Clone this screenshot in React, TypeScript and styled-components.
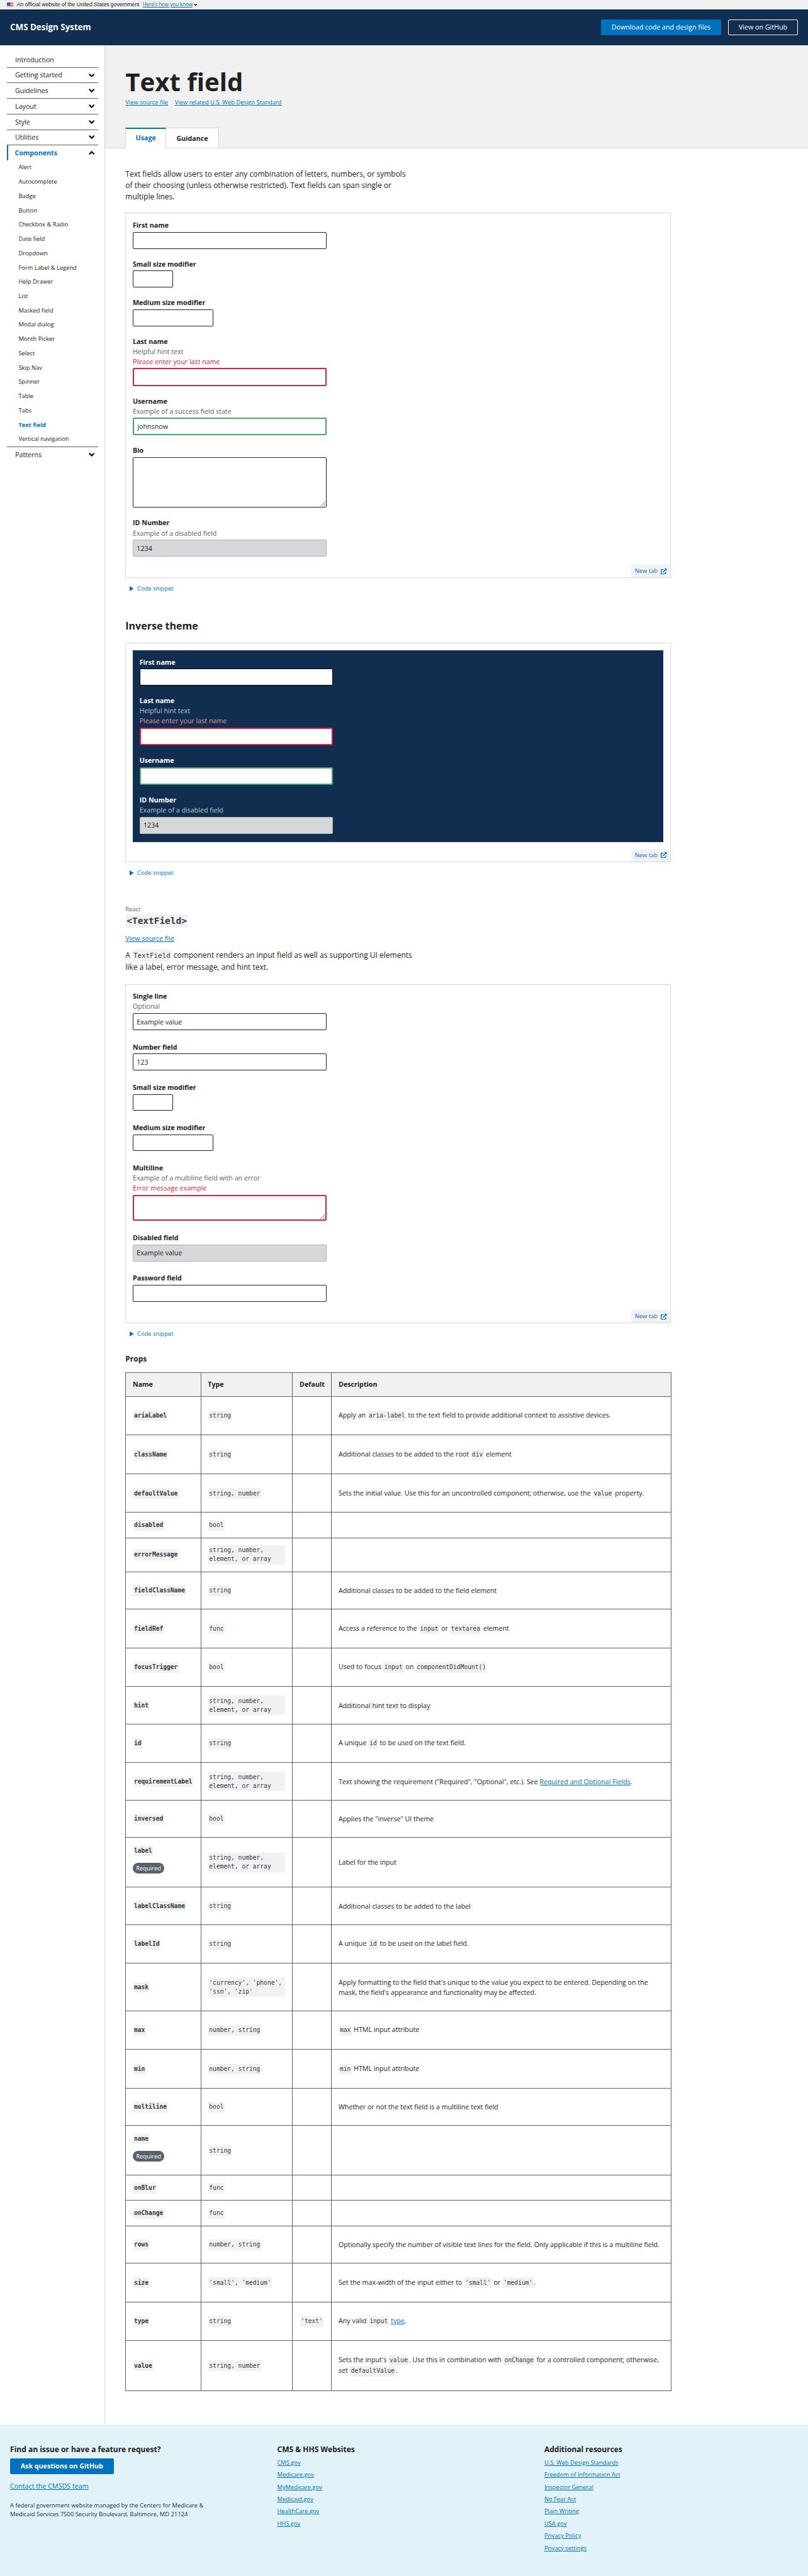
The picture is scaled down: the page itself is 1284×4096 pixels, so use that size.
import React from "react";
import styled, { createGlobalStyle, css } from "styled-components";

const color = {
  ink: "#212121",
  gray: "#5b616b",
  muted: "#f1f1f1",
  line: "#d6d7d9",
  blue: "#0071bc",
  navy: "#112e51",
  error: "#e31c3d",
  success: "#4aa564",
};

const sans = `"Open Sans", "Noto Sans", sans-serif`;
const mono = `"DejaVu Sans Mono", monospace`;

const GlobalStyle = createGlobalStyle`
  *, *::before, *::after { box-sizing: border-box; }
  body { margin: 0; background: #fff; }
`;

/* The design is laid out on a 1920px canvas and shown at 1284px. */
const Page = styled.div`
  zoom: 0.66875;
  width: 1920px;
  height: 6125px;
  overflow: hidden;
  display: flex;
  flex-direction: column;
  font-family: ${sans};
  font-size: 16px;
  line-height: 24px;
  color: ${color.ink};
  background: #fff;
`;

const Link = styled.a`
  color: ${color.blue};
  text-decoration: underline;
`;

/* ---------- Top ---------- */

const Banner = styled.div`
  height: 22px;
  flex: none;
  display: flex;
  align-items: center;
  padding-left: 16px;
  gap: 8px;
  background: #f0f0f0;
  font-family: "Liberation Sans", Arial, sans-serif;
  font-size: 12.9px;
  line-height: 18px;
`;

const BannerToggle = styled.a`
  color: ${color.blue};
  display: flex;
  align-items: center;
  gap: 2px;
  font-family: ${sans};
  font-size: 12px;
  span { text-decoration: underline; }
`;

const Header = styled.header`
  height: 86px;
  flex: none;
  display: flex;
  align-items: center;
  justify-content: space-between;
  padding: 0 24px;
  background: ${color.navy};
`;

const Brand = styled.div`
  color: #fff;
  font-size: 20px;
  line-height: 30px;
  font-weight: 700;
`;

const ButtonRow = styled.div`
  display: flex;
  gap: 16px;
`;

const Button = styled.a<{ $kind?: "outline"; $bold?: boolean; $w: number }>`
  display: flex;
  align-items: center;
  justify-content: center;
  width: ${(p) => p.$w}px;
  height: 38px;
  border-radius: 3px;
  border: 1px solid ${(p) => (p.$kind === "outline" ? "#fff" : color.blue)};
  background: ${(p) => (p.$kind === "outline" ? "transparent" : color.blue)};
  color: #fff;
  font-weight: ${(p) => (p.$bold ? 700 : 400)};
  white-space: nowrap;
`;

/* ---------- Sidebar ---------- */

const Body = styled.div`
  display: flex;
  height: 5657px;
  flex: none;
`;

const Sidebar = styled.nav`
  width: 250px;
  flex: none;
  padding: 16px 16px 0;
  border-right: 1px solid ${color.line};
`;

const NavItem = styled.div<{ $active?: boolean; $plain?: boolean }>`
  height: ${(p) => (p.$plain ? 36 : 37)}px;
  display: flex;
  align-items: center;
  justify-content: space-between;
  padding: 0 8px 0 20px;
  border-bottom: ${(p) => (p.$plain ? "0" : `1px solid ${color.gray}`)};
  ${(p) =>
    p.$active &&
    css`
      color: ${color.blue};
      font-weight: 700;
      border-left: 4px solid ${color.blue};
      padding-left: 16px;
    `}
`;

const SubList = styled.div`
  border-bottom: 1px solid ${color.gray};
`;

const SubItem = styled.div<{ $active?: boolean }>`
  height: 34px;
  padding-left: 28px;
  font-size: 14px;
  line-height: 34px;
  color: ${(p) => (p.$active ? color.blue : color.ink)};
  font-weight: ${(p) => (p.$active ? 700 : 400)};
`;

/* ---------- Main ---------- */

const Main = styled.main`
  flex: 1;
  min-width: 0;
`;

const Hero = styled.div`
  height: 245px;
  padding: 48px 48px 0;
  background: ${color.muted};
  border-bottom: 1px solid ${color.line};
`;

const Title = styled.h1`
  margin: 0;
  font-size: 60px;
  line-height: 78px;
  font-weight: 700;
`;

const HeroLinks = styled.div`
  display: flex;
  gap: 16px;
  font-size: 14px;
  line-height: 21px;
  margin-bottom: 48px;
`;

const Tabs = styled.div`
  display: flex;
`;

const Tab = styled.div<{ $active?: boolean; $w: number }>`
  width: ${(p) => p.$w}px;
  height: ${(p) => (p.$active ? 50 : 49)}px;
  display: flex;
  justify-content: center;
  padding-top: ${(p) => (p.$active ? 9 : 12)}px;
  background: #fff;
  border: 1px solid ${color.line};
  border-bottom: 0;
  font-size: 16px;
  font-weight: 700;
  color: ${color.ink};
  ${(p) =>
    p.$active
      ? css`
          color: ${color.blue};
          border-top: 4px solid ${color.blue};
        `
      : css`
          border-left: 0;
        `}
`;

const Content = styled.div`
  width: 1296px;
  margin-left: 48px;
  padding-top: 48px;
`;

const Lead = styled.p<{ $after: number }>`
  margin: 0 0 ${(p) => p.$after}px;
  width: 684px;
  font-size: 18px;
  line-height: 27px;
`;

const Example = styled.section`
  border: 1px solid ${color.line};
  padding: 16px 0 0 16px;
  display: flex;
  flex-direction: column;
`;

const Fields = styled.div<{ $gap?: number; $inverse?: boolean }>`
  display: flex;
  flex-direction: column;
  gap: ${(p) => p.$gap ?? 24}px;
  padding-bottom: 4px;
  ${(p) =>
    p.$inverse &&
    css`
      background: ${color.navy};
      padding: 16px 16px 20px;
      margin-right: 16px;
    `}
`;

const Label = styled.div<{ $inverse?: boolean }>`
  font-weight: 700;
  color: ${(p) => (p.$inverse ? "#fff" : color.ink)};
`;

const Hint = styled.div<{ $inverse?: boolean }>`
  color: ${(p) => (p.$inverse ? "#bac5cf" : color.gray)};
`;

const ErrorText = styled.div<{ $inverse?: boolean }>`
  color: ${(p) => (p.$inverse ? "#e59393" : color.error)};
`;

type FieldState = "error" | "success" | "disabled";

const inputBase = css<{ $state?: FieldState; $inverse?: boolean; $w?: number; $h?: number }>`
  display: block;
  margin: 4px 0 0;
  width: ${(p) => p.$w ?? 460}px;
  height: ${(p) => p.$h ?? (p.$state === "error" || p.$state === "success" ? 42 : 40)}px;
  padding: 8px;
  border-radius: 3px;
  border: ${(p) =>
    p.$state === "error"
      ? `3px solid ${color.error}`
      : p.$state === "success"
      ? `3px solid ${color.success}`
      : p.$state === "disabled"
      ? "2px solid #aeb0b5"
      : `2px solid ${p.$inverse ? "#000" : color.ink}`};
  background: ${(p) => (p.$state === "disabled" ? color.line : "#fff")};
  color: ${color.ink};
  font: 400 16px/20px ${sans};
  outline: none;
`;

const Input = styled.input`
  ${inputBase}
`;

const TextArea = styled.textarea`
  ${inputBase}
  resize: both;
`;

const NewTab = styled.a`
  align-self: flex-end;
  display: flex;
  align-items: center;
  justify-content: space-between;
  width: 92px;
  height: 30px;
  margin-top: 16px;
  padding: 0 8px;
  background: ${color.muted};
  color: ${color.blue};
  font-size: 14px;
  line-height: 21px;
`;

const Snippet = styled.div<{ $after: number }>`
  display: flex;
  align-items: center;
  gap: 8px;
  height: 21px;
  margin: 15px 0 ${(p) => p.$after}px 10px;
  color: ${color.blue};
  font-size: 14px;
  line-height: 21px;
`;

const Heading = styled.h2`
  margin: 0 0 25px;
  font-size: 24px;
  line-height: 31px;
  font-weight: 700;
`;

const Eyebrow = styled.div`
  font-size: 14px;
  line-height: 21px;
  color: ${color.gray};
`;

const Code = styled.code<{ $block?: boolean; $bold?: boolean }>`
  display: ${(p) => (p.$block ? "block" : "inline-block")};
  margin: 0 1px;
  padding: 2px;
  background: ${color.muted};
  color: #323a45;
  font-family: ${mono};
  font-size: 0.9em;
  line-height: 1.5;
  font-weight: ${(p) => (p.$bold ? 700 : 400)};
`;

const ComponentName = styled.h3`
  margin: 1px 0 13px;
  height: 32px;
  font-size: 24px;
  line-height: 32px;
  ${Code} {
    line-height: 28px;
    vertical-align: top;
  }
`;

const SourceLink = styled.div`
  height: 24px;
  margin-bottom: 15px;
`;

const PropsHeading = styled.h4`
  margin: 0 0 20px;
  font-size: 18px;
  line-height: 23px;
  font-weight: 700;
`;

const Table = styled.table`
  width: 1296px;
  table-layout: fixed;
  border-collapse: collapse;
  font-size: 16px;
  line-height: 24px;
  th,
  td {
    border: 1px solid ${color.gray};
    padding: 0 16px;
    text-align: left;
    vertical-align: middle;
  }
  th {
    background: ${color.muted};
    font-weight: 700;
  }
  ${Code} {
    line-height: 21px;
  }
`;

const Row = styled.tr<{ $h: number }>`
  height: ${(p) => p.$h}px;
`;

const Col = styled.col<{ $w: number }>`
  width: ${(p) => p.$w}px;
`;

const Badge = styled.span`
  display: block;
  width: 75px;
  height: 26px;
  margin: 16px 0 14px;
  border-radius: 13px;
  background: ${color.gray};
  color: #fff;
  font-size: 14px;
  line-height: 26px;
  text-align: center;
`;

/* ---------- Footer ---------- */

const Footer = styled.footer`
  flex: 1;
  display: grid;
  grid-template-columns: repeat(3, 1fr);
  gap: 32px;
  padding: 47px 24px 0;
  background: #e1f3f8;
`;

const FooterTitle = styled.h4`
  margin: 0 0 9px;
  font-size: 18px;
  line-height: 24px;
  font-weight: 700;
`;

const FooterLinks = styled.div`
  display: flex;
  flex-direction: column;
  gap: 8px;
  align-items: flex-start;
  font-size: 14px;
  line-height: 21px;
`;

const Contact = styled.div`
  margin: 16px 0 24px;
`;

const Legal = styled.p`
  margin: 0;
  width: 480px;
  font-size: 14px;
  line-height: 21px;
  color: ${color.navy};
`;

/* ---------- Icons ---------- */

const Chevron = ({ up, size = 14 }: { up?: boolean; size?: number }) => (
  <svg width={size} height={size * 0.64} viewBox="0 0 14 9">
    <path
      d={up ? "M2 7L7 2L12 7" : "M2 2L7 7L12 2"}
      fill="none"
      stroke="#000"
      strokeWidth="3.2"
      strokeLinecap="round"
    />
  </svg>
);

const Flag = () => (
  <svg width="16" height="11" viewBox="0 0 16 11">
    <rect width="16" height="11" fill="#fff" />
    {[0, 2, 4, 6, 8, 10].map((y) => (
      <rect key={y} y={y} width="16" height="1.1" fill="#db3e1f" />
    ))}
    <rect width="8" height="7" fill="#1e33b1" />
    {[1.5, 3.5, 5.5].map((y) =>
      [1.5, 4, 6.5].map((x) => <circle key={`${x}-${y}`} cx={x} cy={y} r="0.55" fill="#fff" />)
    )}
  </svg>
);

const External = () => (
  <svg width="14" height="14" viewBox="0 0 14 14" fill="none" stroke={color.blue} strokeWidth="2">
    <path d="M6.5 2.5H1V13H11.5V8" />
    <path d="M5 9L11.5 2.5" strokeWidth="2.2" />
    <path d="M8 0H14V6Z" fill={color.blue} stroke="none" />
  </svg>
);

const Triangle = () => (
  <svg width="10" height="12" viewBox="0 0 10 12">
    <path d="M0 0L10 6L0 12Z" fill={color.blue} />
  </svg>
);

/* ---------- Composition ---------- */

type FieldProps = {
  label: string;
  hint?: string;
  error?: string;
  value?: string;
  state?: FieldState;
  w?: number;
  h?: number;
  area?: boolean;
  inverse?: boolean;
};

const Field = ({ label, hint, error, value = "", state, w, h, area, inverse }: FieldProps) => (
  <div>
    <Label $inverse={inverse}>{label}</Label>
    {hint && <Hint $inverse={inverse}>{hint}</Hint>}
    {error && <ErrorText $inverse={inverse}>{error}</ErrorText>}
    {area ? (
      <TextArea defaultValue={value} $state={state} $w={w} $h={h} />
    ) : (
      <Input
        defaultValue={value}
        disabled={state === "disabled"}
        $state={state}
        $w={w}
        $h={h}
        $inverse={inverse}
      />
    )}
  </div>
);

const NewTabLink = () => (
  <NewTab>
    New tab <External />
  </NewTab>
);

const CodeSnippet = ({ after }: { after: number }) => (
  <Snippet $after={after}>
    <Triangle /> Code snippet
  </Snippet>
);

type PropRow = {
  h: number;
  name: string;
  type: string;
  wrap?: boolean;
  required?: boolean;
  def?: string;
  text?: React.ReactNode;
};

const rows: PropRow[] = [
  { h: 92, name: "ariaLabel", type: "string", text: <>Apply an <Code>aria-label</Code> to the text field to provide additional context to assistive devices.</> },
  { h: 92, name: "className", type: "string", text: <>Additional classes to be added to the root <Code>div</Code> element</> },
  { h: 92, name: "defaultValue", type: "string, number", text: <>Sets the initial value. Use this for an uncontrolled component; otherwise, use the <Code>value</Code> property.</> },
  { h: 60, name: "disabled", type: "bool" },
  { h: 81, name: "errorMessage", type: "string, number, element, or array", wrap: true },
  { h: 89, name: "fieldClassName", type: "string", text: "Additional classes to be added to the field element" },
  { h: 92, name: "fieldRef", type: "func", text: <>Access a reference to the <Code>input</Code> or <Code>textarea</Code> element</> },
  { h: 92, name: "focusTrigger", type: "bool", text: <>Used to focus <Code>input</Code> on <Code>componentDidMount()</Code></> },
  { h: 89, name: "hint", type: "string, number, element, or array", wrap: true, text: "Additional hint text to display" },
  { h: 92, name: "id", type: "string", text: <>A unique <Code>id</Code> to be used on the text field.</> },
  { h: 89, name: "requirementLabel", type: "string, number, element, or array", wrap: true, text: <>Text showing the requirement ("Required", "Optional", etc.). See <Link>Required and Optional Fields</Link>.</> },
  { h: 89, name: "inversed", type: "bool", text: `Applies the "inverse" UI theme` },
  { h: 118, name: "label", type: "string, number, element, or array", wrap: true, required: true, text: "Label for the input" },
  { h: 89, name: "labelClassName", type: "string", text: "Additional classes to be added to the label" },
  { h: 92, name: "labelId", type: "string", text: <>A unique <Code>id</Code> to be used on the label field.</> },
  { h: 113, name: "mask", type: "'currency', 'phone', 'ssn', 'zip'", wrap: true, text: "Apply formatting to the field that's unique to the value you expect to be entered. Depending on the mask, the field's appearance and functionality may be affected." },
  { h: 92, name: "max", type: "number, string", text: <><Code>max</Code> HTML input attribute</> },
  { h: 92, name: "min", type: "number, string", text: <><Code>min</Code> HTML input attribute</> },
  { h: 89, name: "multiline", type: "bool", text: "Whether or not the text field is a multiline text field" },
  { h: 118, name: "name", type: "string", required: true },
  { h: 60, name: "onBlur", type: "func" },
  { h: 60, name: "onChange", type: "func" },
  { h: 89, name: "rows", type: "number, string", text: "Optionally specify the number of visible text lines for the field. Only applicable if this is a multiline field." },
  { h: 92, name: "size", type: "'small', 'medium'", text: <>Set the max-width of the input either to <Code>'small'</Code> or <Code>'medium'</Code>.</> },
  { h: 92, name: "type", type: "string", def: "'text'", text: <>Any valid <Code>input</Code> <Link>type</Link>.</> },
  { h: 119, name: "value", type: "string, number", text: <>Sets the input's <Code>value</Code>. Use this in combination with <Code>onChange</Code> for a controlled component; otherwise, set <Code>defaultValue</Code>.</> },
];

const components = [
  "Alert", "Autocomplete", "Badge", "Button", "Checkbox & Radio", "Date field", "Dropdown",
  "Form Label & Legend", "Help Drawer", "List", "Masked field", "Modal dialog", "Month Picker",
  "Select", "Skip Nav", "Spinner", "Table", "Tabs", "Text field", "Vertical navigation",
];

const cmsSites = ["CMS.gov", "Medicare.gov", "MyMedicare.gov", "Medicaid.gov", "HealthCare.gov", "HHS.gov"];
const resources = [
  "U.S. Web Design Standards", "Freedom of Information Act", "Inspector General", "No Fear Act",
  "Plain Writing", "USA.gov", "Privacy Policy", "Privacy settings",
];

export default function App() {
  return (
    <>
      <GlobalStyle />
      <Page>
        <Banner>
          <Flag />
          An official website of the United States government
          <BannerToggle>
            <span>Here’s how you know</span>
            <Chevron size={8} />
          </BannerToggle>
        </Banner>
        <Header>
          <Brand>CMS Design System</Brand>
          <ButtonRow>
            <Button $w={286}>Download code and design files</Button>
            <Button $w={166} $kind="outline">View on GitHub</Button>
          </ButtonRow>
        </Header>

        <Body>
          <Sidebar>
            <NavItem>Introduction</NavItem>
            {["Getting started", "Guidelines", "Layout", "Style", "Utilities"].map((t) => (
              <NavItem key={t}>{t}<Chevron /></NavItem>
            ))}
            <NavItem $active $plain>Components<Chevron up /></NavItem>
            <SubList>
              {components.map((t) => (
                <SubItem key={t} $active={t === "Text field"}>{t}</SubItem>
              ))}
            </SubList>
            <NavItem $plain>Patterns<Chevron /></NavItem>
          </Sidebar>

          <Main>
            <Hero>
              <Title>Text field</Title>
              <HeroLinks>
                <Link>View source file</Link>
                <Link>View related U.S. Web Design Standard</Link>
              </HeroLinks>
              <Tabs>
                <Tab $active $w={97}>Usage</Tab>
                <Tab $w={125}>Guidance</Tab>
              </Tabs>
            </Hero>

            <Content>
              <Lead $after={24}>
                Text fields allow users to enter any combination of letters, numbers, or symbols of
                their choosing (unless otherwise restricted). Text fields can span single or
                multiple lines.
              </Lead>

              <Example>
                <Fields>
                  <Field label="First name" />
                  <Field label="Small size modifier" w={96} />
                  <Field label="Medium size modifier" w={192} />
                  <Field label="Last name" hint="Helpful hint text" error="Please enter your last name" state="error" />
                  <Field label="Username" hint="Example of a success field state" value="johnsnow" state="success" />
                  <Field label="Bio" area h={120} />
                  <Field label="ID Number" hint="Example of a disabled field" value="1234" state="disabled" />
                </Fields>
                <NewTabLink />
              </Example>
              <CodeSnippet after={62} />

              <Heading>Inverse theme</Heading>
              <Example>
                <Fields $inverse>
                  <Field inverse label="First name" />
                  <Field inverse label="Last name" hint="Helpful hint text" error="Please enter your last name" state="error" />
                  <Field inverse label="Username" state="success" />
                  <Field inverse label="ID Number" hint="Example of a disabled field" value="1234" state="disabled" />
                </Fields>
                <NewTabLink />
              </Example>
              <CodeSnippet after={66} />

              <Eyebrow>React</Eyebrow>
              <ComponentName>
                <Code $bold>&lt;TextField&gt;</Code>
              </ComponentName>
              <SourceLink>
                <Link>View source file</Link>
              </SourceLink>
              <Lead $after={26}>
                A <Code>TextField</Code> component renders an input field as well as supporting UI
                elements like a label, error message, and hint text.
              </Lead>

              <Example>
                <Fields $gap={28}>
                  <Field label="Single line" hint="Optional" value="Example value" />
                  <Field label="Number field" value="123" />
                  <Field label="Small size modifier" w={96} />
                  <Field label="Medium size modifier" w={192} />
                  <Field label="Multiline" hint="Example of a multiline field with an error" error="Error message example" state="error" area h={62} />
                  <Field label="Disabled field" value="Example value" state="disabled" />
                  <Field label="Password field" />
                </Fields>
                <NewTabLink />
              </Example>
              <CodeSnippet after={37} />

              <PropsHeading>Props</PropsHeading>
              <Table>
                <colgroup>
                  <Col $w={178.5} />
                  <Col $w={218} />
                  <Col $w={92.5} />
                  <Col $w={807} />
                </colgroup>
                <thead>
                  <Row $h={57}>
                    <th>Name</th>
                    <th>Type</th>
                    <th>Default</th>
                    <th>Description</th>
                  </Row>
                </thead>
                <tbody>
                  {rows.map((r) => (
                    <Row key={r.name} $h={r.h}>
                      <td>
                        <Code $bold>{r.name}</Code>
                        {r.required && <Badge>Required</Badge>}
                      </td>
                      <td><Code $block={r.wrap}>{r.type}</Code></td>
                      <td>{r.def && <Code>{r.def}</Code>}</td>
                      <td>{r.text}</td>
                    </Row>
                  ))}
                </tbody>
              </Table>
            </Content>
          </Main>
        </Body>

        <Footer>
          <div>
            <FooterTitle>Find an issue or have a feature request?</FooterTitle>
            <Button $w={246} $bold>Ask questions on GitHub</Button>
            <Contact><Link>Contact the CMSDS team</Link></Contact>
            <Legal>
              A federal government website managed by the Centers for Medicare &amp; Medicaid
              Services 7500 Security Boulevard, Baltimore, MD 21124
            </Legal>
          </div>
          <div>
            <FooterTitle>CMS &amp; HHS Websites</FooterTitle>
            <FooterLinks>{cmsSites.map((t) => <Link key={t}>{t}</Link>)}</FooterLinks>
          </div>
          <div>
            <FooterTitle>Additional resources</FooterTitle>
            <FooterLinks>{resources.map((t) => <Link key={t}>{t}</Link>)}</FooterLinks>
          </div>
        </Footer>
      </Page>
    </>
  );
}
